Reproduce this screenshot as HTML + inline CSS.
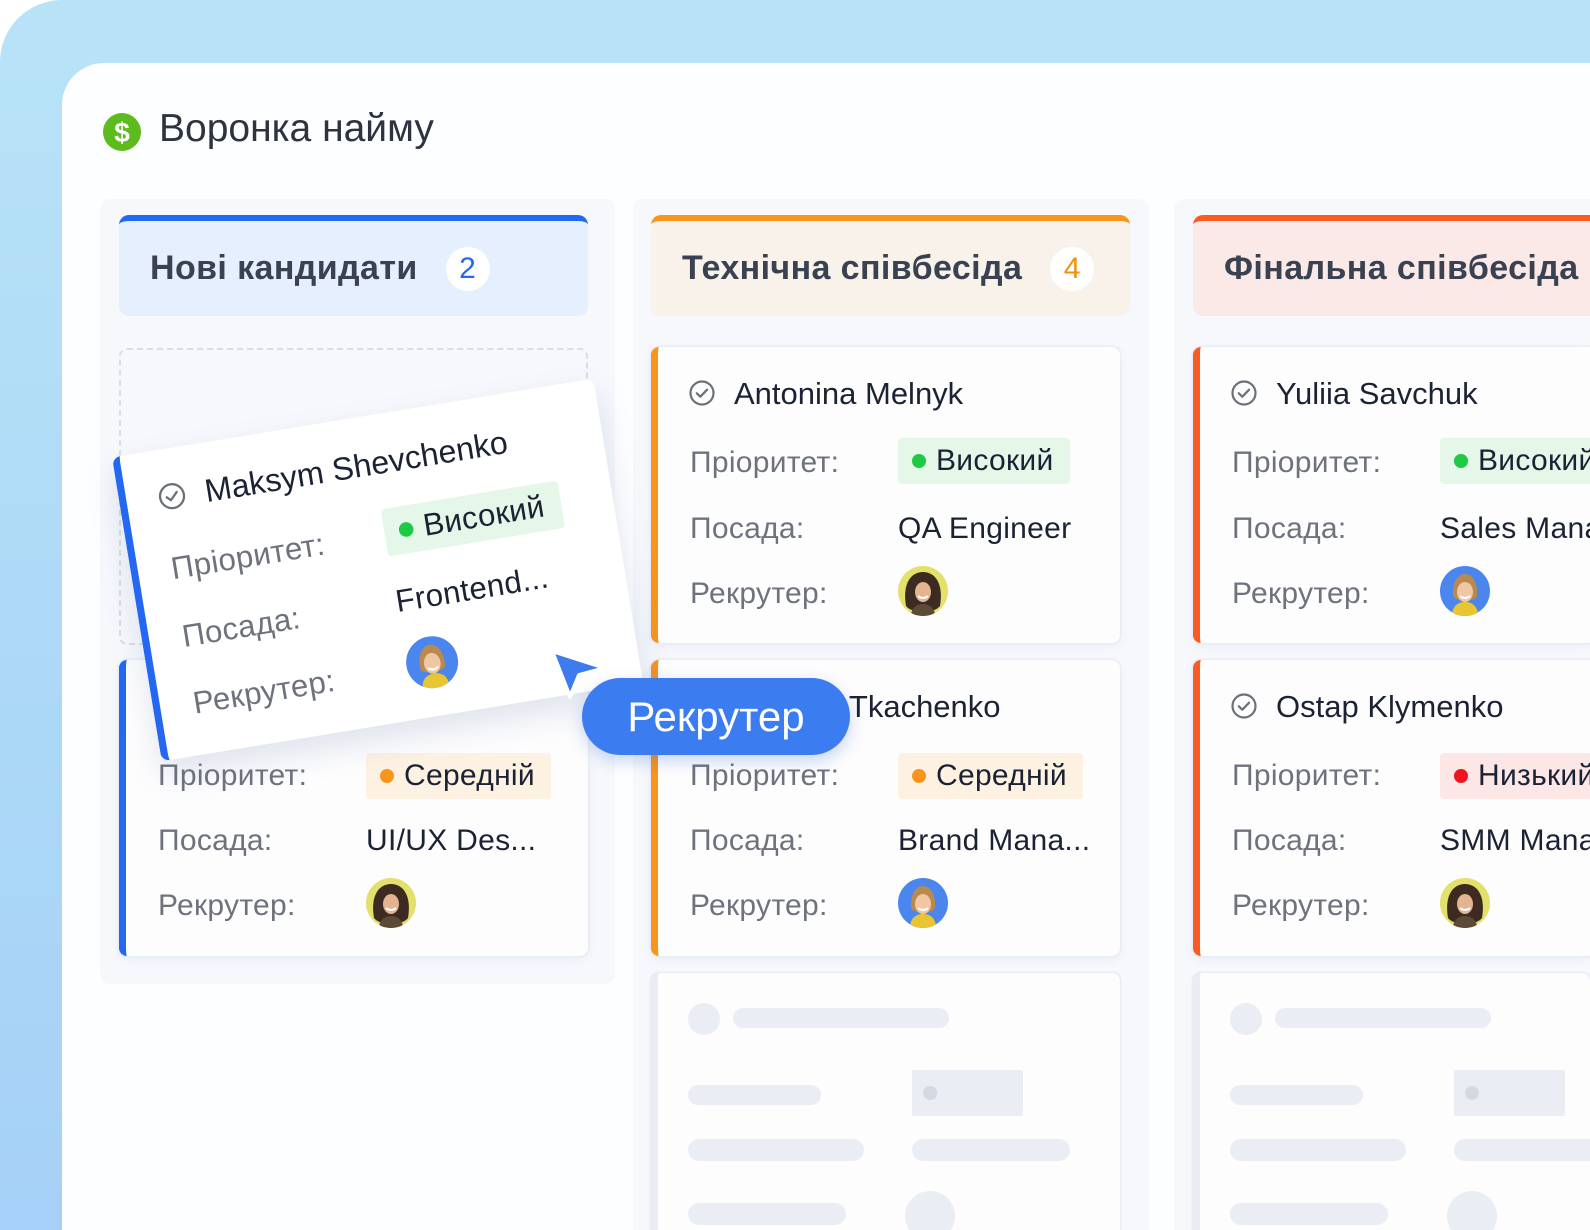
<!DOCTYPE html>
<html><head><meta charset="utf-8"><style>
*{margin:0;padding:0;box-sizing:border-box}
html,body{width:1590px;height:1230px;overflow:hidden}
body{background:#fff;font-family:"Liberation Sans","DejaVu Sans",sans-serif;position:relative}
.bg{position:absolute;left:0;top:0;width:1590px;height:1230px;background:linear-gradient(180deg,#b8e3f7 0%,#acd8f7 60%,#a6d0f7 100%);border-radius:62px 0 0 0;overflow:hidden}
.panel{position:absolute;left:62px;top:63px;width:1528px;height:1167px;background:#fdfeff;border-radius:42px 0 0 0;overflow:hidden}
.abs{position:absolute}
.col{position:absolute;background:#f6f8fc;border-radius:10px}
.hdr{position:absolute;height:101px;border-radius:10px;border-top:6px solid;font-size:34px;font-weight:bold;color:#3a4252;display:flex;align-items:center;padding-left:31px;letter-spacing:0.4px}
.badge{display:inline-flex;width:44px;height:44px;border-radius:50%;background:#fff;align-items:center;justify-content:center;font-weight:normal;font-size:30px;margin-left:28px}
.card{position:absolute;width:469px;height:296px;background:#fdfdfe;border-radius:8px;border-left:7px solid;box-shadow:0 0 0 1.5px #e8ecf3,0 4px 10px rgba(100,120,160,.08)}
.card .nm{position:absolute;left:76px;top:29px;font-size:31px;color:#1b2234}
.card .ck{position:absolute;left:30px;top:32px}
.lab{position:absolute;left:32px;font-size:30px;color:#6d727c;letter-spacing:0.3px}
.val{position:absolute;left:240px;font-size:30px;color:#1b2234;letter-spacing:0.3px}
.pill{position:absolute;left:240px;height:46px;border-radius:4px;padding:0 16px 0 38px;font-size:30px;color:#1b2234;line-height:46px;letter-spacing:0.3px}
.pill i{position:absolute;left:14px;top:16px;width:14px;height:14px;border-radius:50%}
.av{position:absolute;left:240px;width:50px;height:50px;border-radius:50%;overflow:hidden}
.sk{position:absolute;background:#eaedf4;border-radius:12px}
.skc{border-radius:8px 8px 0 0!important;box-shadow:0 0 0 1.5px #e8ecf3!important}
</style></head><body>
<div class="bg"><div class="panel"></div>

<svg class="abs" style="left:102px;top:112px" width="40" height="40" viewBox="0 0 40 40"><circle cx="20" cy="20" r="19" fill="#5dbb1e"/><text x="20" y="30" text-anchor="middle" font-family="Liberation Sans" font-weight="bold" font-size="28" fill="#fff">$</text></svg>
<div class="abs" style="left:159px;top:107px;font-size:39px;color:#2e3340">Воронка найму</div>

<div class="col" style="left:100px;top:199px;width:515px;height:785px"></div>
<div class="col" style="left:633px;top:199px;width:516px;height:1031px;border-radius:10px 10px 0 0"></div>
<div class="col" style="left:1174px;top:199px;width:416px;height:1031px;border-radius:10px 0 0 0"></div>

<div class="hdr" style="left:119px;top:215px;width:469px;background:#e6effd;border-color:#2468f2">Нові кандидати<span class="badge" style="color:#2468f2">2</span></div>
<div class="hdr" style="left:651px;top:215px;width:479px;background:#f8f2ea;border-color:#f7951c">Технічна співбесіда<span class="badge" style="color:#f0920f">4</span></div>
<div class="hdr" style="left:1193px;top:215px;width:397px;background:#fbe9e8;border-color:#fa5b25;border-radius:10px 0 0 10px;white-space:nowrap;overflow:hidden">Фінальна співбесіда</div>

<div class="abs" style="left:119px;top:348px;width:469px;height:297px;border:2px dashed #d8dde6;border-radius:8px"></div>

<svg width="0" height="0" style="position:absolute"><defs>
<symbol id="ck" viewBox="0 0 28 28"><circle cx="14" cy="14" r="11.5" fill="none" stroke="#6b7079" stroke-width="2.2"/><path d="M8.8 14.3l3.5 3.4 6.8-7" fill="none" stroke="#6b7079" stroke-width="2.2" stroke-linecap="round" stroke-linejoin="round"/></symbol>
<symbol id="a1" viewBox="0 0 50 50"><rect width="50" height="50" fill="#4a86ee"/><path d="M12 50c0-10 6-14 13-14s13 4 13 14z" fill="#e9c531"/><path d="M13 30c-1-14 5-22 12-22s13 8 12 22c-2 6-22 6-24 0z" fill="#b98a4f"/><ellipse cx="25" cy="26" rx="8" ry="10" fill="#f0c7a2"/><path d="M20 30q5 4 10 0" stroke="#fff" stroke-width="2" fill="none"/></symbol>
<symbol id="a2" viewBox="0 0 50 50"><rect width="50" height="50" fill="#e3e06c"/><path d="M8 40c-4-24 6-34 17-34s21 10 17 34c-6 8-28 8-34 0z" fill="#3d2a20"/><path d="M13 50c0-8 6-12 12-12s12 4 12 12z" fill="#5b4a38"/><ellipse cx="25" cy="26" rx="8" ry="10" fill="#e4b491"/><path d="M20 30q5 4 10 0" stroke="#fff" stroke-width="2" fill="none"/></symbol>
</defs></svg>

<div class="card" style="left:119px;top:660px;border-color:#2468f2">
  <svg class="ck" width="28" height="28"><use href="#ck"/></svg><div class="nm">Iryna Petrenko</div>
  <div class="lab" style="top:99px">Пріоритет:</div><div class="pill" style="top:93px;background:#fdf1e2"><i style="background:#f7951c"></i>Середній</div>
  <div class="lab" style="top:164px">Посада:</div><div class="val" style="top:164px">UI/UX Des...</div>
  <div class="lab" style="top:229px">Рекрутер:</div><svg class="av" style="top:218px" viewBox="0 0 50 50"><use href="#a2"/></svg>
</div>

<div class="card" style="left:651px;top:347px;border-color:#f7951c">
  <svg class="ck" width="28" height="28"><use href="#ck"/></svg><div class="nm">Antonina Melnyk</div>
  <div class="lab" style="top:99px">Пріоритет:</div><div class="pill" style="top:91px;background:#e5f7e8"><i style="background:#1ec945"></i>Високий</div>
  <div class="lab" style="top:165px">Посада:</div><div class="val" style="top:165px">QA Engineer</div>
  <div class="lab" style="top:230px">Рекрутер:</div><svg class="av" style="top:219px" viewBox="0 0 50 50"><use href="#a2"/></svg>
</div>
<div class="card" style="left:651px;top:660px;border-color:#f7951c">
  <svg class="ck" width="28" height="28"><use href="#ck"/></svg><div class="nm">Oksana Tkachenko</div>
  <div class="lab" style="top:99px">Пріоритет:</div><div class="pill" style="top:93px;background:#fdf1e2"><i style="background:#f7951c"></i>Середній</div>
  <div class="lab" style="top:164px">Посада:</div><div class="val" style="top:164px">Brand Mana...</div>
  <div class="lab" style="top:229px">Рекрутер:</div><svg class="av" style="top:218px" viewBox="0 0 50 50"><use href="#a1"/></svg>
</div>
<div class="card skc" style="left:651px;top:973px;height:257px;border-color:#e9ecf2;overflow:hidden">
  <div class="sk" style="left:30px;top:30px;width:32px;height:32px;border-radius:50%"></div>
  <div class="sk" style="left:75px;top:35px;width:216px;height:20px"></div>
  <div class="sk" style="left:30px;top:112px;width:133px;height:20px"></div>
  <div class="sk" style="left:254px;top:97px;width:111px;height:46px;border-radius:2px"></div>
  <div class="abs" style="left:265px;top:113px;width:14px;height:14px;border-radius:50%;background:#d3d8e1"></div>
  <div class="sk" style="left:30px;top:166px;width:176px;height:22px"></div>
  <div class="sk" style="left:254px;top:166px;width:158px;height:22px"></div>
  <div class="sk" style="left:30px;top:230px;width:158px;height:22px"></div>
  <div class="sk" style="left:247px;top:218px;width:50px;height:50px;border-radius:50%"></div>
</div>

<div class="card" style="left:1193px;top:347px;width:397px;border-radius:8px 0 0 8px;border-color:#fa5b25;overflow:hidden;white-space:nowrap">
  <svg class="ck" width="28" height="28"><use href="#ck"/></svg><div class="nm">Yuliia Savchuk</div>
  <div class="lab" style="top:99px">Пріоритет:</div><div class="pill" style="top:91px;background:#e5f7e8"><i style="background:#1ec945"></i>Високий</div>
  <div class="lab" style="top:165px">Посада:</div><div class="val" style="top:165px">Sales Manager</div>
  <div class="lab" style="top:230px">Рекрутер:</div><svg class="av" style="top:219px" viewBox="0 0 50 50"><use href="#a1"/></svg>
</div>
<div class="card" style="left:1193px;top:660px;width:397px;border-radius:8px 0 0 8px;border-color:#fa5b25;overflow:hidden;white-space:nowrap">
  <svg class="ck" width="28" height="28"><use href="#ck"/></svg><div class="nm">Ostap Klymenko</div>
  <div class="lab" style="top:99px">Пріоритет:</div><div class="pill" style="top:93px;background:#fde6e6"><i style="background:#f0141e"></i>Низький</div>
  <div class="lab" style="top:164px">Посада:</div><div class="val" style="top:164px">SMM Manager</div>
  <div class="lab" style="top:229px">Рекрутер:</div><svg class="av" style="top:218px" viewBox="0 0 50 50"><use href="#a2"/></svg>
</div>
<div class="card skc" style="left:1193px;top:973px;width:397px;height:257px;border-color:#e9ecf2;overflow:hidden">
  <div class="sk" style="left:30px;top:30px;width:32px;height:32px;border-radius:50%"></div>
  <div class="sk" style="left:75px;top:35px;width:216px;height:20px"></div>
  <div class="sk" style="left:30px;top:112px;width:133px;height:20px"></div>
  <div class="sk" style="left:254px;top:97px;width:111px;height:46px;border-radius:2px"></div>
  <div class="abs" style="left:265px;top:113px;width:14px;height:14px;border-radius:50%;background:#d3d8e1"></div>
  <div class="sk" style="left:30px;top:166px;width:176px;height:22px"></div>
  <div class="sk" style="left:254px;top:166px;width:140px;height:22px;border-radius:12px 0 0 12px"></div>
  <div class="sk" style="left:30px;top:230px;width:158px;height:22px"></div>
  <div class="sk" style="left:247px;top:218px;width:50px;height:50px;border-radius:50%"></div>
</div>

<div class="card" style="left:143px;top:422px;width:469px;height:296px;border-color:#2468f2;background:#fff;transform:rotate(-9.3deg) scale(1.04);box-shadow:0 14px 30px rgba(90,110,160,.18)">
  <svg class="ck" width="28" height="28"><use href="#ck"/></svg><div class="nm">Maksym Shevchenko</div>
  <div class="lab" style="top:99px">Пріоритет:</div><div class="pill" style="top:91px;background:#e5f7e8"><i style="background:#1ec945"></i>Високий</div>
  <div class="lab" style="top:165px">Посада:</div><div class="val" style="top:165px">Frontend...</div>
  <div class="lab" style="top:230px">Рекрутер:</div><svg class="av" style="top:219px" viewBox="0 0 50 50"><use href="#a1"/></svg>
</div>

<svg class="abs" style="left:545px;top:645px" width="70" height="60" viewBox="0 0 70 60"><path d="M7 6L60 23 34 30 25 52z" fill="#3d7bef" stroke="#fff" stroke-width="4" stroke-linejoin="round"/></svg>
<div class="abs" style="left:582px;top:678px;width:268px;height:77px;border-radius:39px;background:#3b7cf0;color:#fff;font-size:42px;line-height:77px;text-align:center;box-shadow:0 6px 16px rgba(40,90,200,.25)">Рекрутер</div>
</div>
</body></html>
